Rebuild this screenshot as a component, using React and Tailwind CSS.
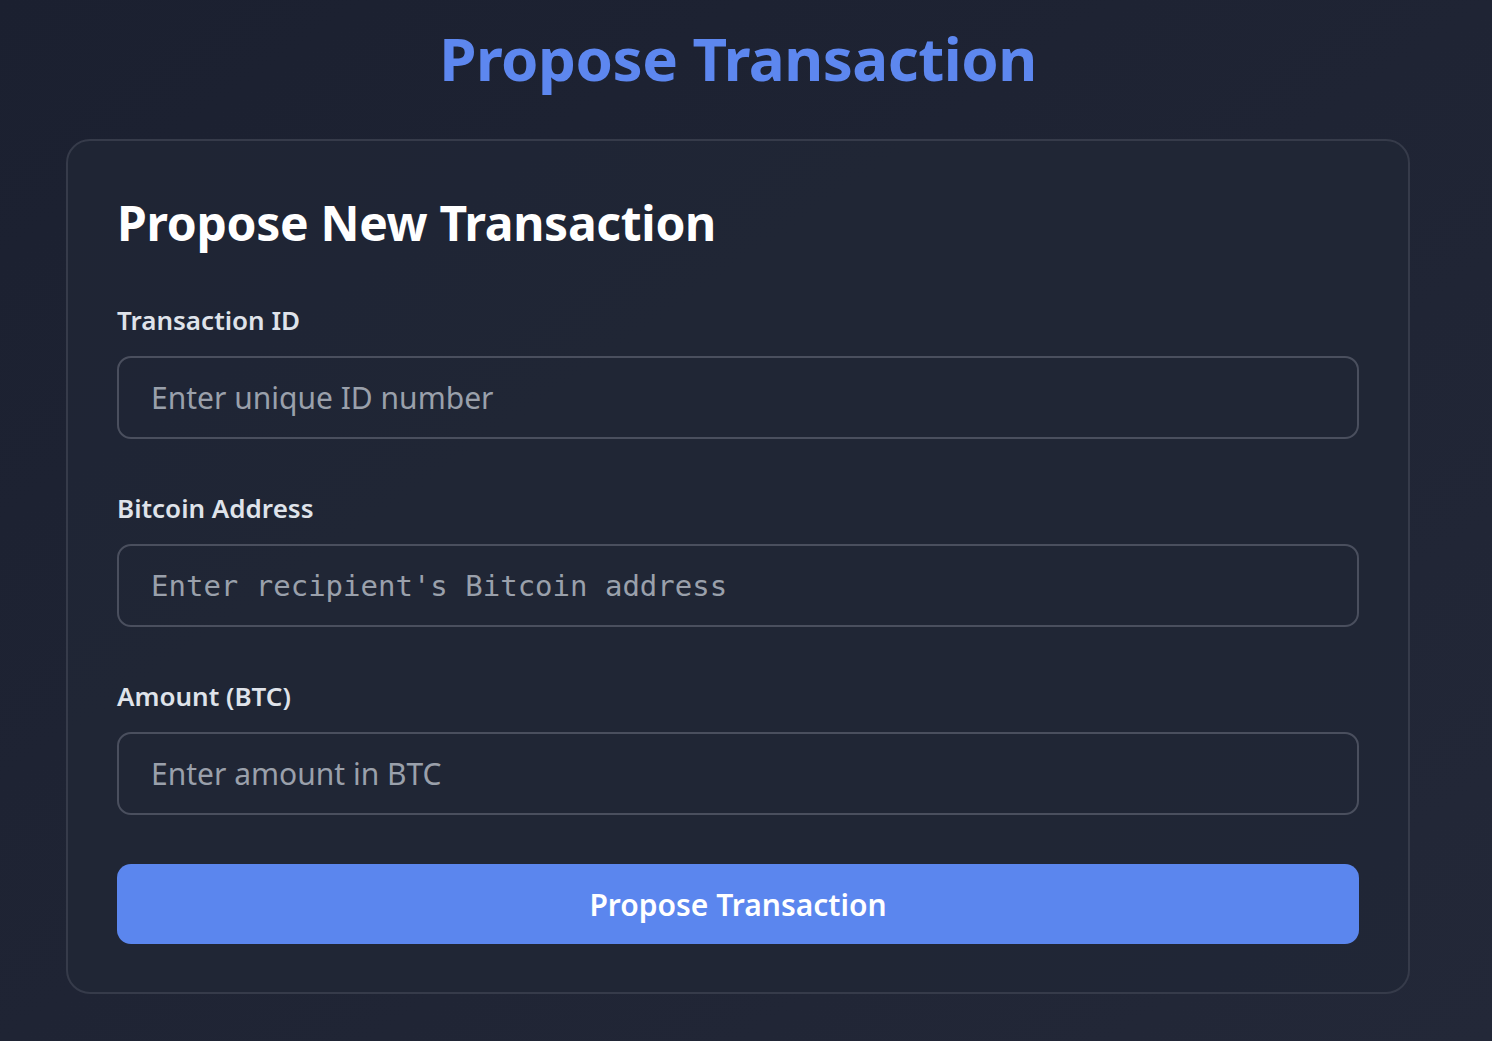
export default function App() {
  const sans = { fontFamily: '"Noto Sans", "Open Sans", sans-serif' };
  const inputCls =
    "h-[83px] rounded-[14px] border-2 border-[#4a4f5e] bg-transparent px-[32px] text-white placeholder:text-[#9aa0ab] outline-none";
  return (
    <div
      className="min-h-[1041px] w-full pr-[16px] bg-gradient-to-br from-[#1b2030] to-[#232838] flex flex-col items-center"
      style={sans}
    >
      <h1 className="mt-[22px] text-[60px] leading-[72px] font-bold text-[#5d87ef] tracking-[-0.5px]">
        Propose Transaction
      </h1>
      <div className="mt-[45px] w-[1344px] rounded-[24px] border-2 border-[#363b4a] bg-[#212736]/80 px-[49px] pt-[52px] pb-[48px]">
        <h2 className="text-[48px] leading-[60px] font-bold text-white tracking-[-0.3px]">
          Propose New Transaction
        </h2>
        <form className="mt-[49px] flex flex-col">
          <label className="text-[26px] leading-[36px] font-semibold text-[#dfe3ea]">Transaction ID</label>
          <input className={"mt-[18px] text-[30px] " + inputCls} placeholder="Enter unique ID number" />
          <label className="mt-[51px] text-[26px] leading-[36px] font-semibold text-[#dfe3ea]">Bitcoin Address</label>
          <input
            className={"mt-[18px] text-[29px] " + inputCls}
            style={{ fontFamily: '"DejaVu Sans Mono", monospace' }}
            placeholder="Enter recipient's Bitcoin address"
          />
          <label className="mt-[51px] text-[26px] leading-[36px] font-semibold text-[#dfe3ea]">Amount (BTC)</label>
          <input className={"mt-[18px] text-[30px] " + inputCls} placeholder="Enter amount in BTC" />
          <button
            type="button"
            className="mt-[49px] h-[80px] rounded-[14px] bg-[#5b86ee] text-[30px] font-semibold text-white"
          >
            Propose Transaction
          </button>
        </form>
      </div>
    </div>
  );
}
